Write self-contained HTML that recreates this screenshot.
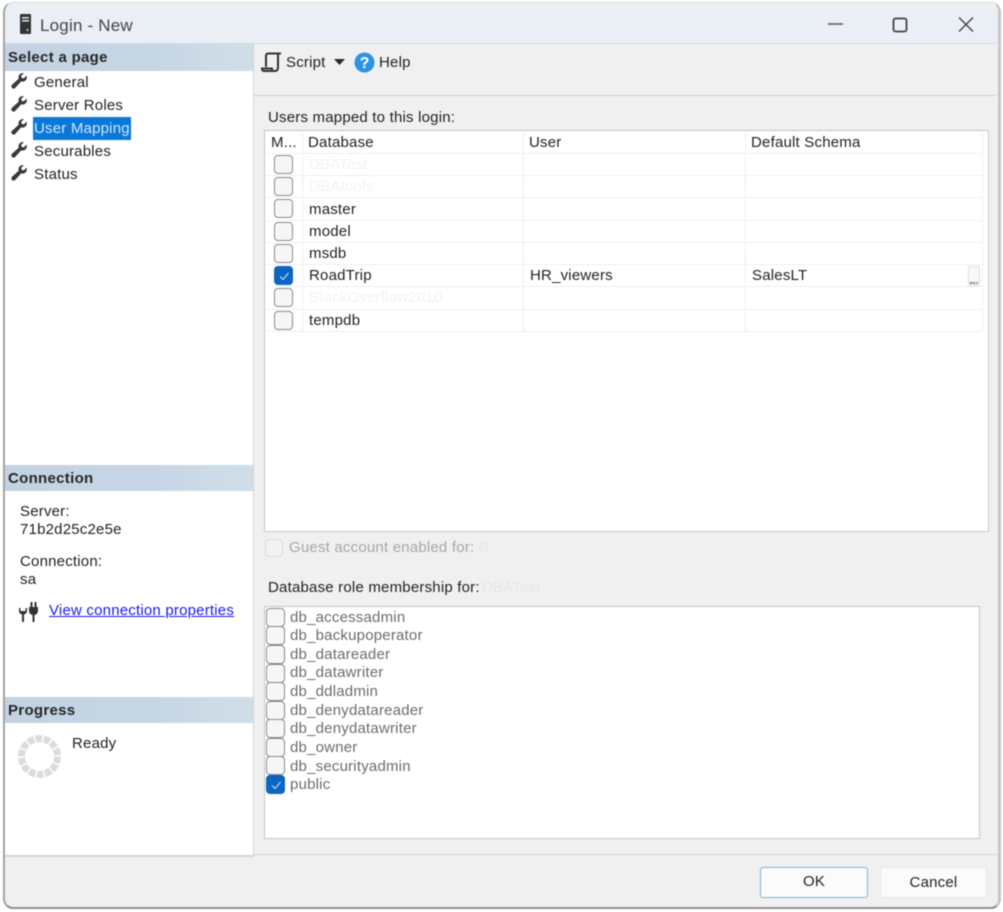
<!DOCTYPE html>
<html>
<head>
<meta charset="utf-8">
<style>
html,body{margin:0;padding:0;width:1003px;height:912px;overflow:hidden;background:#fff}
#root{position:absolute;left:0;top:0;width:1003px;height:912px;overflow:hidden;filter:blur(.5px);font-family:"Liberation Sans",sans-serif;font-size:15px;letter-spacing:.2px;color:#222}
#win{position:absolute;left:4px;top:3px;width:994px;height:905px;background:#f0f0f0;border-radius:9px;overflow:hidden}
#frame{position:absolute;left:3px;top:2px;width:998px;height:907px;border-style:solid;border-width:1.5px 3px 2px 2px;border-color:#d8d8d8 #c6c6c6 #8f8f8f #a4a4a4;border-radius:10px;pointer-events:none;box-sizing:border-box}
.a{position:absolute;white-space:nowrap}
.t{position:absolute;white-space:nowrap;line-height:18px}
.band{position:absolute;left:5px;width:248px;height:26px;background:linear-gradient(90deg,#c3d3e3 0%,#c6d6e5 60%,#cedce8 85%,#d0deea 100%)}
.band span{position:absolute;left:3px;top:5px;font-weight:bold;line-height:18px;font-size:15px;letter-spacing:.3px;color:#262626}
.cb{position:absolute;width:19px;height:19px;box-sizing:border-box;border:1.5px solid #8a8a8a;border-radius:4px;background:#f6f6f6}
.cb.on{background:#0b66c3;border-color:#0b66c3}
.cb.on svg{position:absolute;left:2px;top:2px}
.row{position:absolute;left:266px;width:716px;height:1px;background:#eee}
.g{color:#6c6c6c}
</style>
</head>
<body>
<div id="root">
<div id="win"></div>
<div class="a" style="left:5px;top:4px;width:992px;height:40px;background:#e9eff5;border-radius:9px 9px 0 0"></div>
<div class="a" style="left:5px;top:43px;width:992px;height:1px;background:#d4d8dc"></div>

<svg class="a" style="left:18px;top:13px" width="15" height="22" viewBox="0 0 15 22"><rect x="2" y="1" width="11" height="20" rx="1" fill="#333"/><rect x="4" y="4" width="7" height="1.6" fill="#ddd"/><rect x="4" y="7" width="7" height="1.6" fill="#ddd"/><circle cx="9.5" cy="17" r="1" fill="#ddd"/></svg>
<div class="t" style="left:40px;top:17px;font-size:17px;color:#454545">Login - New</div>

<svg class="a" style="left:820px;top:10px" width="170" height="30" viewBox="0 0 170 30">
<rect x="8" y="13" width="15" height="2" fill="#777"/>
<rect x="73.500" y="8.500" width="13" height="13" rx="2" fill="none" stroke="#444" stroke-width="1.800"/>
<path d="M139 7.500L153 21.500M153 7.500L139 21.500" stroke="#444" stroke-width="1.400" fill="none"/>
</svg>

<!-- Left panel -->
<div class="a" style="left:5px;top:44px;width:248px;height:811px;background:#fff"></div>
<div class="a" style="left:253px;top:44px;width:1px;height:811px;background:#d6d6d6"></div>
<div class="a" style="left:5px;top:855px;width:249px;height:1.500px;background:#d6d6d6"></div>
<div class="a" style="left:254px;top:854px;width:743px;height:1px;background:#d4d4d4"></div>

<div class="band" style="top:44px;height:27px"><span style="top:5px">Select a page</span></div>
<div class="a" style="left:33px;top:117px;width:98px;height:23px;background:#0a78d7"></div>

<svg width="0" height="0" style="position:absolute"><defs><symbol id="w" viewBox="0 0 18 18"><path d="M16.500 2.800L13.300 5.800L11.300 5L10.700 3L13.700 .3C11.300-.5 8.600 1 8 3.400C7.800 4.300 7.900 5.200 8.200 6L1.100 12.500C.1 13.500 .2 15 1.100 15.900C2.100 16.900 3.600 16.800 4.500 15.800L10.800 8.900C12.900 9.500 15.200 8.600 16.300 6.700C16.800 5.700 16.900 3.900 16.500 2.800Z" fill="#3a3a3a"/></symbol></defs></svg>
<svg class="a" style="left:11px;top:73px" width="17" height="17"><use href="#w"/></svg>
<svg class="a" style="left:11px;top:96px" width="17" height="17"><use href="#w"/></svg>
<svg class="a" style="left:11px;top:119px" width="17" height="17"><use href="#w"/></svg>
<svg class="a" style="left:11px;top:142px" width="17" height="17"><use href="#w"/></svg>
<svg class="a" style="left:11px;top:165px" width="17" height="17"><use href="#w"/></svg>

<div class="t" style="left:34px;top:74px">General</div>
<div class="t" style="left:34px;top:97px">Server Roles</div>
<div class="t" style="left:34px;top:120px;color:#cfe6fb">User Mapping</div>
<div class="t" style="left:34px;top:143px">Securables</div>
<div class="t" style="left:34px;top:166px">Status</div>

<div class="band" style="top:465px"><span>Connection</span></div>
<div class="t" style="left:20px;top:503px">Server:</div>
<div class="t" style="left:20px;top:521px">71b2d25c2e5e</div>
<div class="t" style="left:20px;top:553px">Connection:</div>
<div class="t" style="left:20px;top:571px">sa</div>
<svg class="a" style="left:18px;top:601px" width="21" height="22" viewBox="0 0 21 22">
<path d="M1 7V10C1 12 2.500 13 4 13.500V21H6V13.500C7.500 13 9 12 9 10V7H7.500V10H2.500V7Z" fill="#333"/>
<path d="M11 6H20V10C20 12 18.500 13.500 16.500 14V21H14.500V14C12.500 13.500 11 12 11 10Z" fill="#333"/>
<rect x="12.500" y="1" width="2" height="5" fill="#333"/><rect x="16.500" y="1" width="2" height="5" fill="#333"/>
</svg>
<div class="t" style="left:49px;top:602px;color:#1a1af0;text-decoration:underline">View connection properties</div>

<div class="band" style="top:697px"><span>Progress</span></div>
<svg class="a" style="left:17px;top:734px" width="45" height="45" viewBox="0 0 45 45">
<circle cx="22.500" cy="22.500" r="18" fill="none" stroke="#dcdcdc" stroke-width="7" stroke-dasharray="6.500 1.580"/>
</svg>
<div class="t" style="left:72px;top:735px">Ready</div>

<!-- Toolbar -->
<div class="a" style="left:254px;top:95px;width:743px;height:1px;background:#d0d0d0"></div>
<svg class="a" style="left:261px;top:51px" width="22" height="23" viewBox="0 0 22 23">
<path d="M7 2.500H20M7 2.500C5.500 2.500 5 3.500 5 5V16M17 2.500V16C17 18.500 16 20 14 20H3C1.500 20 1 19 1 17.500H11V20" fill="none" stroke="#333" stroke-width="2"/>
</svg>
<div class="t" style="left:286px;top:54px">Script</div>
<svg class="a" style="left:334px;top:58px" width="12" height="8"><path d="M0 1H11L5.500 7Z" fill="#2a2a2a"/></svg>
<svg class="a" style="left:354px;top:52px" width="21" height="21" viewBox="0 0 21 21"><circle cx="10.500" cy="10.500" r="10" fill="#2c93e3"/><text x="10.500" y="16" text-anchor="middle" font-family="Liberation Sans" font-weight="bold" font-size="16" letter-spacing="0" fill="#fff">?</text></svg>
<div class="t" style="left:379px;top:54px">Help</div>

<div class="t" style="left:268px;top:109px">Users mapped to this login:</div>

<!-- Grid -->
<div class="a" style="left:264px;top:130px;width:725px;height:402px;box-sizing:border-box;background:#fff;border:1px solid #c8c8c8;border-top:1.500px solid #c4c4c4;border-left:1.500px solid #c4c4c4"></div>
<div class="row" style="top:153px"></div>
<div class="row" style="top:175px"></div>
<div class="row" style="top:197px"></div>
<div class="row" style="top:220px"></div>
<div class="row" style="top:242px"></div>
<div class="row" style="top:264px"></div>
<div class="row" style="top:286px"></div>
<div class="row" style="top:309px"></div>
<div class="row" style="top:331px"></div>
<div class="a" style="left:302px;top:131px;width:1px;height:200px;background:#eee"></div>
<div class="a" style="left:523px;top:131px;width:1px;height:200px;background:#eee"></div>
<div class="a" style="left:745px;top:131px;width:1px;height:200px;background:#eee"></div>
<div class="a" style="left:982px;top:131px;width:1px;height:200px;background:#eee"></div>

<div class="t" style="left:271px;top:134px">M...</div>
<div class="t" style="left:308px;top:134px">Database</div>
<div class="t" style="left:529px;top:134px">User</div>
<div class="t" style="left:751px;top:134px">Default Schema</div>

<div class="cb" style="left:274px;top:155px"></div>
<div class="cb" style="left:274px;top:177px"></div>
<div class="cb" style="left:274px;top:199px"></div>
<div class="cb" style="left:274px;top:222px"></div>
<div class="cb" style="left:274px;top:244px"></div>
<div class="cb on" style="left:274px;top:266px"><svg width="14" height="14" viewBox="0 0 14 14"><path d="M3 7.500L6 10.500L11.500 4" fill="none" stroke="#cfe4f8" stroke-width="1"/></svg></div>
<div class="cb" style="left:274px;top:288px"></div>
<div class="cb" style="left:274px;top:311px"></div>

<div class="t" style="left:309px;top:156px;color:#f3f3f3">DBATest</div>
<div class="t" style="left:309px;top:178px;color:#f3f3f3">DBAtools</div>
<div class="t" style="left:309px;top:201px">master</div>
<div class="t" style="left:309px;top:223px">model</div>
<div class="t" style="left:309px;top:245px">msdb</div>
<div class="t" style="left:309px;top:267px">RoadTrip</div>
<div class="t" style="left:530px;top:267px">HR_viewers</div>
<div class="t" style="left:752px;top:267px">SalesLT</div>
<div class="a" style="left:968px;top:266px;width:12px;height:20px;box-sizing:border-box;background:#f8f8f8;border:1px solid #dedede;border-radius:2px"></div>
<div class="a" style="left:970px;top:282px;width:2px;height:2px;background:#777;box-shadow:3px 0 #777,6px 0 #999"></div>
<div class="t" style="left:309px;top:289px;color:#f3f3f3">StackOverflow2010</div>
<div class="t" style="left:309px;top:312px">tempdb</div>

<!-- Guest -->
<div class="cb" style="left:265px;top:539px;width:18px;height:18px;border-color:#dadada;background:#f2f2f2"></div>
<div class="t" style="left:289px;top:539px;color:#a6a6a6">Guest account enabled for:</div>
<div class="t" style="left:478px;top:539px;color:#e8e8e8">D</div>

<div class="t" style="left:268px;top:579px">Database role membership for:</div>
<div class="t" style="left:482px;top:579px;color:#e6e6e6">DBATest</div>

<!-- Roles -->
<div class="a" style="left:264px;top:606px;width:716px;height:233px;box-sizing:border-box;background:#fff;border:1px solid #c4c4c4"></div>
<div class="cb" style="left:266px;top:608px"></div>
<div class="cb" style="left:266px;top:626px"></div>
<div class="cb" style="left:266px;top:645px"></div>
<div class="cb" style="left:266px;top:664px"></div>
<div class="cb" style="left:266px;top:682px"></div>
<div class="cb" style="left:266px;top:701px"></div>
<div class="cb" style="left:266px;top:719px"></div>
<div class="cb" style="left:266px;top:738px"></div>
<div class="cb" style="left:266px;top:756px"></div>
<div class="cb on" style="left:266px;top:775px"><svg width="14" height="14" viewBox="0 0 14 14"><path d="M3 7.500L6 10.500L11.500 4" fill="none" stroke="#cfe4f8" stroke-width="1"/></svg></div>

<div class="t g" style="left:290px;top:609px">db_accessadmin</div>
<div class="t g" style="left:290px;top:627px">db_backupoperator</div>
<div class="t g" style="left:290px;top:646px">db_datareader</div>
<div class="t g" style="left:290px;top:664px">db_datawriter</div>
<div class="t g" style="left:290px;top:683px">db_ddladmin</div>
<div class="t g" style="left:290px;top:702px">db_denydatareader</div>
<div class="t g" style="left:290px;top:720px">db_denydatawriter</div>
<div class="t g" style="left:290px;top:739px">db_owner</div>
<div class="t g" style="left:290px;top:758px">db_securityadmin</div>
<div class="t g" style="left:290px;top:776px">public</div>

<!-- Buttons -->
<div class="a" style="left:760px;top:867px;width:108px;height:31px;box-sizing:border-box;background:#fbfbfb;border:1.500px solid #7fb3dd;border-radius:3px;text-align:center;line-height:28px">OK</div>
<div class="a" style="left:880px;top:867px;width:107px;height:31px;box-sizing:border-box;background:#fbfbfb;border:1px solid #e6e6e6;border-radius:3px;text-align:center;line-height:29px">Cancel</div>

<div id="frame"></div>
</div>
</body>
</html>
